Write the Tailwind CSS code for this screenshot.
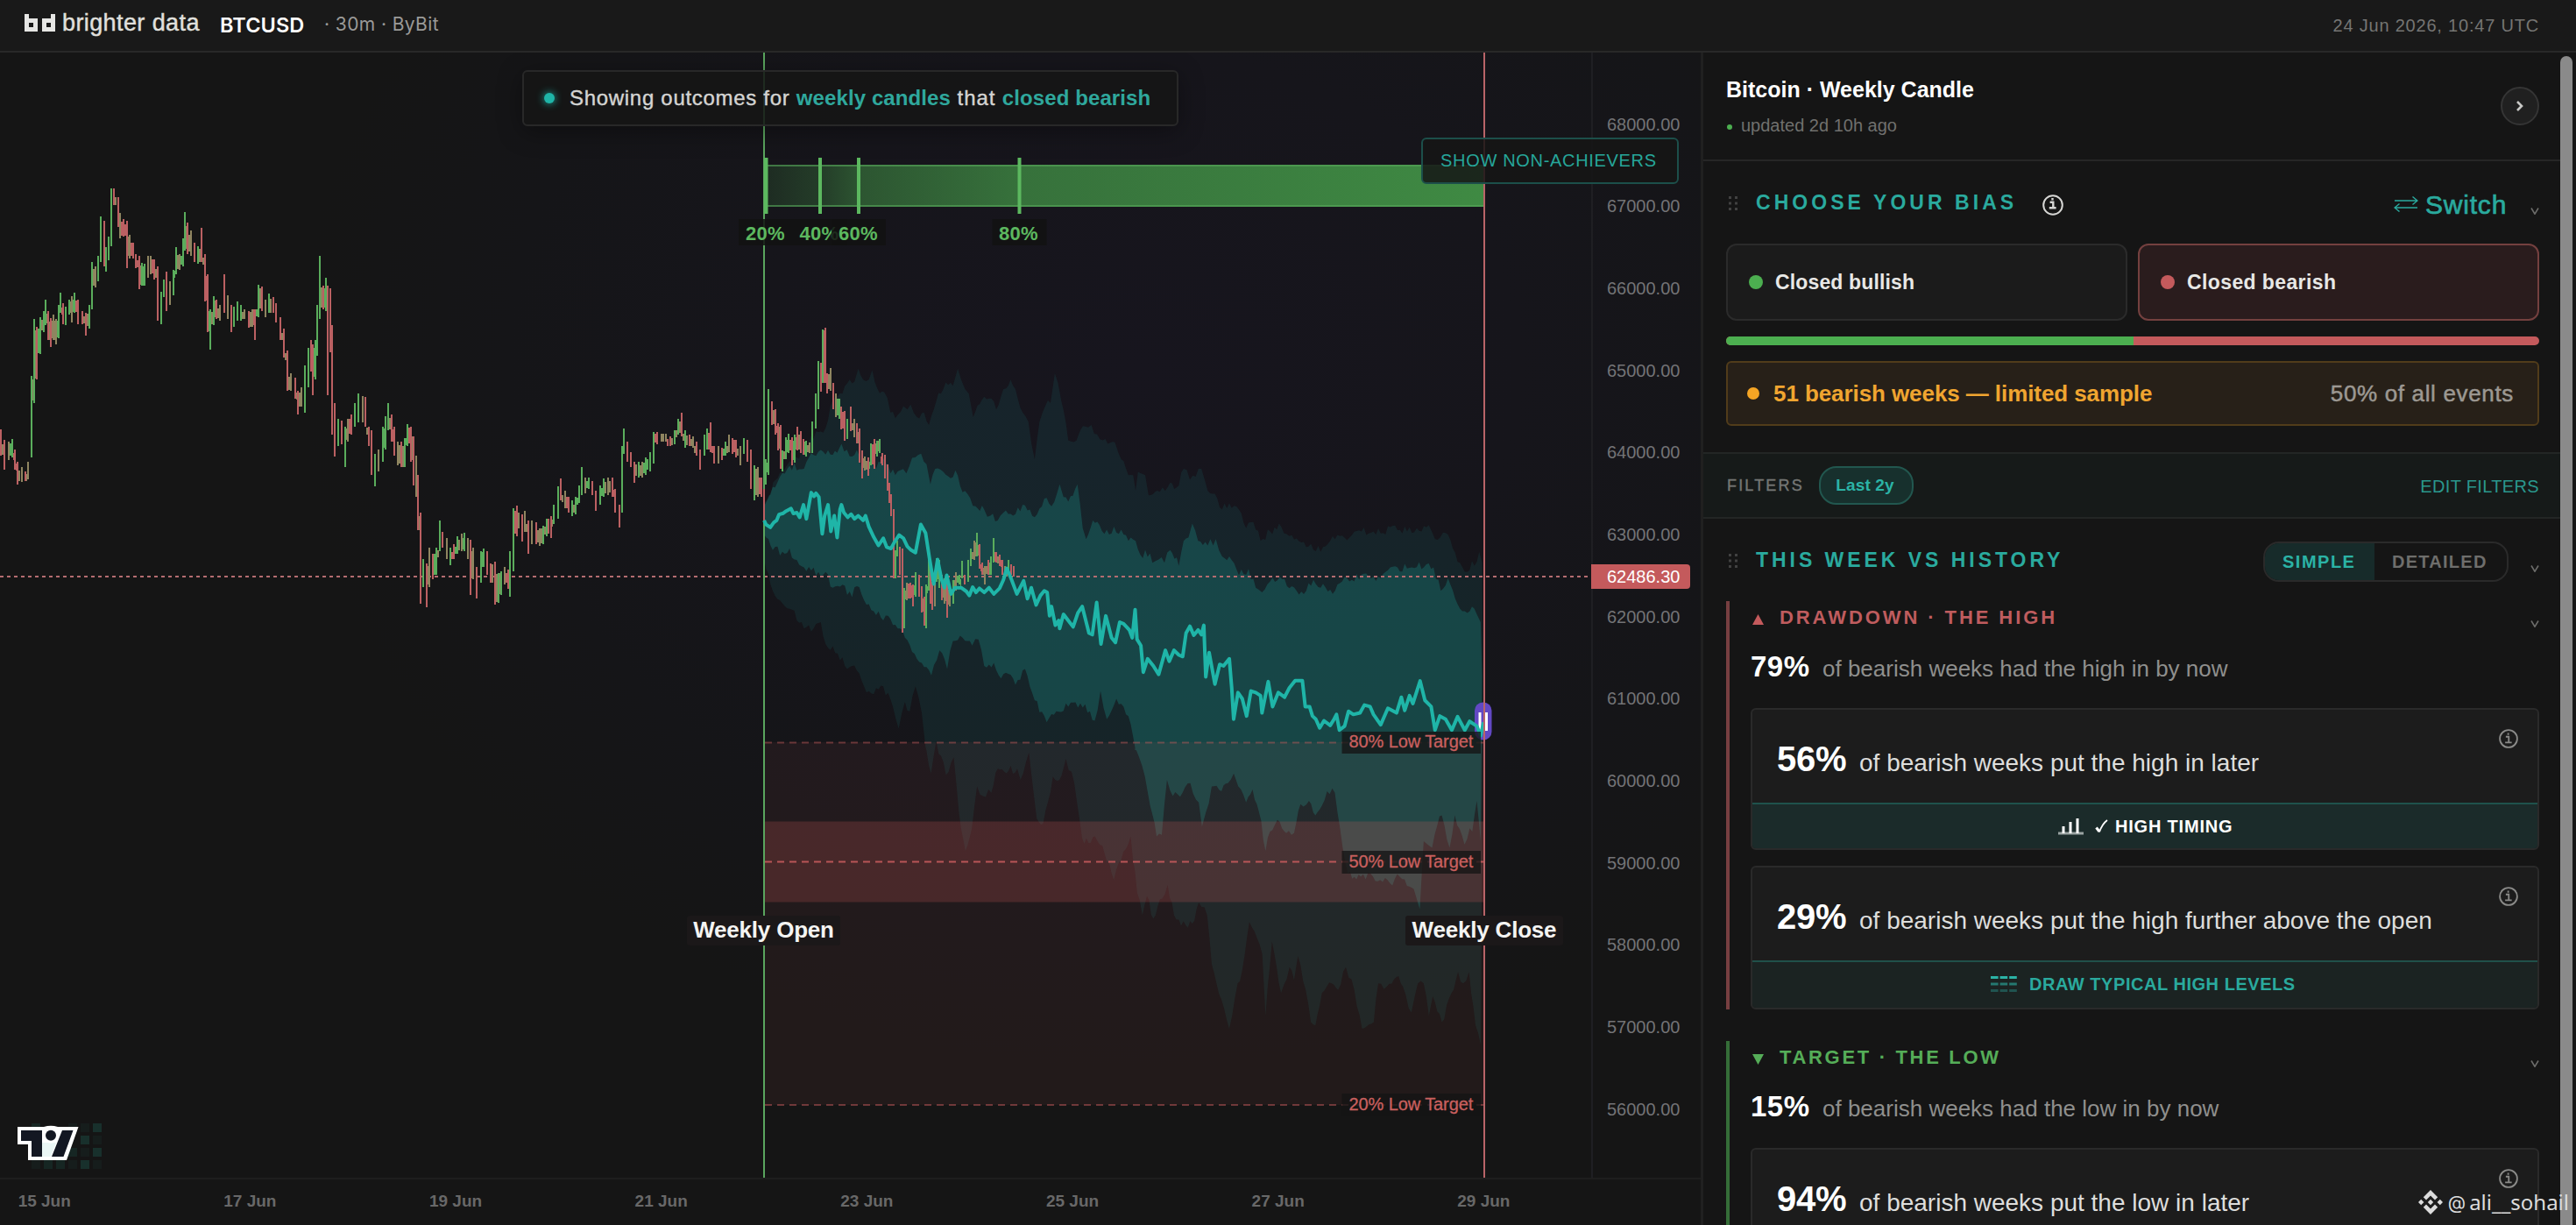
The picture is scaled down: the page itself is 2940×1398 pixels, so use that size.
<!DOCTYPE html>
<html lang="en">
<head>
<meta charset="utf-8">
<title>BTCUSD · brighter data</title>
<script src="https://cdn.jsdelivr.net/npm/@tailwindcss/browser@4"></script>
</head>
<body class="flex h-[1398px] w-[2940px] flex-col overflow-hidden bg-[#151515] font-['Liberation_Sans',Arial,sans-serif] leading-none text-[#e8e8e6]">

<!-- Top bar -->
<header class="flex h-[60px] shrink-0 items-center justify-between border-b-2 border-[#282828] bg-[#191919] pr-[42px] pl-7">
  <div class="flex items-center">
    <svg class="-mt-[6px] h-5 w-9 fill-[#e6e6e4]" viewBox="0 0 36 20"><path fill-rule="evenodd" d="M0 0h5v5h10v15H0zM5 10v5h5v-5z"/><path fill-rule="evenodd" d="M30 0h5v20H20V5h10zM25 10v5h5v-5z"/></svg>
    <span class="-mt-[6px] ml-[7px] w-[180px] text-[27px] tracking-[0.4px] text-[#e0e0de] [-webkit-text-stroke:0.4px]">brighter data</span>
    <span class="-mt-[1px] w-[119px] font-['Inter'] text-[23.5px] font-semibold tracking-[0.1px] text-white">BTCUSD</span>
    <span class="-mt-[3px] font-['Inter'] text-[21px] tracking-[0.4px] text-[#9a9a98]">· 30m · ByBit</span>
  </div>
  <span class="-mt-[1px] text-[20px] tracking-[0.8px] text-[#757573]">24 Jun 2026, 10:47 UTC</span>
</header>

<main class="flex min-h-0 flex-1 overflow-hidden">
  <!-- Chart -->
  <section class="relative flex w-[1941px] shrink-0 flex-col bg-[radial-gradient(ellipse_960px_800px_at_1300px_360px,#17151e_0%,#16151b_45%,#151518_75%,#151515_100%)]">
    <div class="flex h-[1284px]">
      <svg id="plot" class="h-[1284px] w-[1816px] shrink-0" viewBox="0 60 1816 1284" font-family="Liberation Sans, Arial, sans-serif">
        <defs>
          <linearGradient id="reach" x1="872" x2="1694" y1="0" y2="0" gradientUnits="userSpaceOnUse">
            <stop offset="0" stop-color="#4caf50" stop-opacity=".14"/>
            <stop offset=".08" stop-color="#4caf50" stop-opacity=".26"/>
            <stop offset=".135" stop-color="#4caf50" stop-opacity=".42"/>
            <stop offset=".355" stop-color="#4caf50" stop-opacity=".6"/>
            <stop offset="1" stop-color="#4caf50" stop-opacity=".76"/>
          </linearGradient>
        </defs>
        <polygon id="outer" fill="#1fb5a8" fill-opacity=".1"/>
        <polygon id="inner" fill="#1fb5a8" fill-opacity=".235"/>
        <rect x="872" y="847" width="822" height="414" fill="#d05a5c" fill-opacity=".075"/>
        <rect x="872" y="937.5" width="822" height="92" fill="#d05a5c" fill-opacity=".22"/>
        <g stroke="#c45a5c" stroke-width="2">
          <path d="M873 847.5H1694" stroke-opacity=".45" stroke-dasharray="8 6"/>
          <path d="M873 983.5H1694" stroke-opacity=".9" stroke-dasharray="8 6"/>
          <path d="M873 1261H1694" stroke-opacity=".5" stroke-dasharray="8 6"/>
        </g>
        <rect x="872" y="188" width="822" height="48" fill="url(#reach)"/>
        <path d="M872 189H1694M872 235H1694" stroke="#57a85a" stroke-opacity=".6" stroke-width="2"/>
        <path d="M0 658H1816" stroke="#b46c70" stroke-width="2" stroke-dasharray="4 4"/>
        <path d="M872 60V1344" stroke="#5aa55e" stroke-width="2"/>
        <g id="candles" shape-rendering="crispEdges"></g>
        <rect x="1683" y="801.500" width="19.500" height="43" rx="9.500" fill="#6248c4"/>
        <path d="M1689 813V834M1696.500 813V834" stroke="#fff" stroke-width="3"/>
        <polyline id="median" fill="none" stroke="#1fb5a8" stroke-width="4" stroke-linejoin="round"/>
        <path d="M1694 60V1344" stroke="#b96468" stroke-width="2"/>
        <g fill="#5cb85f">
          <path d="M872 180h4.500v64h-4.500zM934 180h4v64h-4zM978 180h4v64h-4zM1161.500 180h4v64h-4z"/>
          <g font-size="22" font-weight="700" text-anchor="middle" letter-spacing=".3">
            <rect x="843" y="250" width="62" height="30" fill="#121212" fill-opacity=".85"/><text x="873.500" y="274">20%</text>
            <rect x="905" y="250" width="62" height="30" fill="#121212" fill-opacity=".85"/><text x="935" y="274">40%</text>
            <rect x="949" y="250" width="62" height="30" fill="#121212" fill-opacity=".85"/><text x="979.500" y="274">60%</text>
            <rect x="1132.500" y="250" width="62" height="30" fill="#121212" fill-opacity=".85"/><text x="1162.500" y="274">80%</text>
          </g>
        </g>
        <g font-size="20" fill="#c9605f" stroke-width=".3" letter-spacing="-.1">
          <rect x="1531.500" y="835" width="158.500" height="25" fill="#141414" fill-opacity=".78"/><text x="1539.500" y="853" stroke="#c9605f">80% Low Target</text>
          <rect x="1531.500" y="971" width="158.500" height="26" fill="#141414" fill-opacity=".78"/><text x="1539.500" y="990" stroke="#c9605f">50% Low Target</text>
          <rect x="1531.500" y="1248" width="158.500" height="26" fill="#141414" fill-opacity=".78"/><text x="1539.500" y="1267" stroke="#c9605f">20% Low Target</text>
        </g>
        <g font-size="26" font-weight="700" fill="#f4f4f2" text-anchor="middle" letter-spacing="-.2">
          <rect x="784" y="1045" width="175" height="34" rx="3" fill="#1b1819"/><text x="871.500" y="1069.500">Weekly Open</text>
          <rect x="1604" y="1045" width="180" height="34" rx="3" fill="#1b1819"/><text x="1694" y="1069.500">Weekly Close</text>
        </g>
        <!-- chart library badge -->
        <g fill="#1d5a50">
          <path fill-opacity=".4" d="M106 1282h10v10h-10zM92 1296h10v10h-10zM106 1310h10v10h-10zM92 1324h10v10h-10z"/>
          <path fill-opacity=".25" d="M36 1282h10v10h-10zM78 1310h10v10h-10zM64 1324h10v10h-10zM50 1324h10v10h-10z"/>
          <path fill-opacity=".12" d="M78 1282h10v10h-10zM92 1282h10v10h-10zM106 1296h10v10h-10zM92 1310h10v10h-10zM78 1324h10v10h-10zM106 1324h10v10h-10zM36 1324h10v10h-10z"/>
        </g>
        <path fill="#fff" d="M20 1286H50Q58 1283.500 66 1286H89.500L76 1324H32V1306H20z"/>
        <path fill="#eaf6f5" d="M48 1304H64L58 1320H48z"/>
        <path fill="#131722" d="M24 1290H48V1320H36V1302H24zM71 1290H83.500L72.500 1320H59z"/>
        <circle cx="58" cy="1295.700" r="9" fill="#fff"/><circle cx="58" cy="1295.700" r="6" fill="#131722"/>
      </svg>
      <!-- Price scale -->
      <div class="relative w-[125px] border-l-2 border-[#1f1f23] pt-[35px] pl-[16px] text-[20px] text-[#737376]">
        <div id="prices"></div>
        <div class="absolute top-[584px] -left-[2px] flex h-[28px] w-[113px] items-center rounded-r bg-[#c45a5c] pl-[18px] text-white">62486.30</div>
      </div>
    </div>
    <!-- Time scale -->
    <div id="days" class="flex flex-1 overflow-hidden border-t-2 border-[#1e1e1e] pt-[15px] text-[19px] font-bold text-[#686868]"></div>

    <div class="absolute top-[20px] left-[596px] flex h-[64px] w-[749px] items-center rounded-md border-2 border-[#282828] bg-[#151515]/85 pl-[23px] text-[24px] whitespace-pre shadow-[0_6px_28px_rgba(0,0,0,0.35)]">
      <span class="mr-[17px] size-3 rounded-full bg-[#1fb5a8] shadow-[0_0_10px_#1fb5a8]"></span><span class="-mt-[1px] flex"><span class="tracking-[0.7px] text-[#d4d4d2] [-webkit-text-stroke:0.4px]">Showing outcomes for </span><span class="font-bold tracking-[0.1px] text-[#2fa89d]">weekly candles</span><span class="tracking-[0.9px] text-[#d4d4d2] [-webkit-text-stroke:0.4px]"> that </span><span class="font-bold tracking-[0.1px] text-[#2fa89d]">closed bearish</span></span>
    </div>
    <div class="absolute top-[97px] left-[1622px] flex h-[53px] w-[294px] items-center rounded-md border-2 border-[#1c4f4a] bg-[#151515]/85 pb-[1px] pl-5 text-[20px] tracking-[0.68px] whitespace-nowrap text-[#26a69a]">SHOW NON-ACHIEVERS</div>
  </section>

  <!-- Side panel -->
  <aside class="relative min-w-0 flex-1 border-l-[3px] border-[#202020]">
    <div class="w-[979px]">
      <div class="flex h-[124px] items-center justify-between border-b-2 border-[#262626] pr-[25px] pl-[26px]">
        <div>
          <div class="flex h-[30px] items-center text-[25px] font-bold text-white">Bitcoin · Weekly Candle</div>
          <div class="mt-[13px] flex h-6 items-center text-[20px] text-[#70706e]"><i class="mt-1 mr-[10px] ml-[1px] size-[6px] rounded-full bg-[#4caf50]"></i>updated 2d 10h ago</div>
        </div>
        <div class="flex size-11 items-center justify-center rounded-full border-2 border-[#353535] bg-[#202020]">
          <svg class="h-3 w-2" viewBox="0 0 8 12" fill="none" stroke="#c8c8c6" stroke-width="2.600"><path d="M1 1l5 5-5 5"/></svg>
        </div>
      </div>

      <div class="flex h-[94px] items-center pt-[2px] pr-[25px] pl-[26px]">
        <svg class="ml-[3px] h-[16px] w-[11px] fill-[#414141]" viewBox="0 0 11 16"><path d="M0 0h3v3H0zM7 0h3v3H7zM0 6.500h3v3H0zM7 6.500h3v3H7zM0 13h3v3H0zM7 13h3v3H7z"/></svg>
        <span class="-mt-[1px] ml-[20px] text-[23px] font-bold tracking-[4.05px] text-[#2aaa9e]">CHOOSE YOUR BIAS</span>
        <svg class="mt-1 ml-[29px] size-6" viewBox="0 0 24 24" fill="none" stroke="#d6d6d4" stroke-width="2"><circle cx="12" cy="12" r="10.800"/><path stroke-width="2.400" d="M8.600 8.800H12.300V15.300M7.800 15.300H15.600M11.500 4v2.600"/></svg>
        <span class="flex-1"></span>
        <svg class="mt-[2px] h-[18px] w-[28px]" viewBox="0 0 28 18" fill="none" stroke="#2aaa9e" stroke-width="1.400"><path d="M1 5H27M21.500 .5L27 5L21.500 9.500M27 13H1M6.500 8.500L1 13L6.500 17.500"/></svg>
        <span class="mt-[3px] ml-[8px] w-[120px] text-[30px] tracking-[0.8px] text-[#2aaa9e] [-webkit-text-stroke:0.7px]">Switch</span>
        <svg class="mt-[18px] h-[8px] w-[10px]" viewBox="0 0 10 8" fill="none" stroke="#6c6c6a" stroke-width="1.600"><path d="M1 .5L5 7.200L9 .5"/></svg>
      </div>

      <div class="flex gap-[12px] pr-[25px] pl-[26px] text-[23px] font-bold">
        <div class="flex h-[88px] flex-1 items-center rounded-[12px] border-2 border-[#2b2b2b] bg-[#1b1b1b] pl-6 tracking-[0.14px]"><i class="mr-[14px] size-4 rounded-full bg-[#4caf50]"></i>Closed bullish</div>
        <div class="flex h-[88px] flex-1 items-center rounded-[12px] border-2 border-[#74403f] bg-[#2a1c1d] pl-6 tracking-[0.39px]"><i class="mr-[14px] size-4 rounded-full bg-[#c45a5c]"></i>Closed bearish</div>
      </div>
      <div class="mt-[18px] mr-[25px] ml-[26px] flex h-[10px] overflow-hidden rounded-[5px] bg-[#c45a5c]"><div class="w-[465px] bg-[#4caf50]"></div></div>
      <div class="mt-[18px] mr-[25px] ml-[26px] flex h-[74px] items-center justify-between rounded-md border-2 border-[#513c1a] bg-[#272018] pr-[27px] pl-[22px] text-[26px]">
        <span class="flex items-center font-bold tracking-[-0.08px] text-[#f0a530]"><i class="mr-[16px] size-[14px] rounded-full bg-[#f5a524]"></i>51 bearish weeks — limited sample</span>
        <span class="tracking-[0.66px] text-[#9c9892] [-webkit-text-stroke:0.5px]">50% of all events</span>
      </div>

      <div class="mt-[30px] flex h-[76px] items-center border-y-2 border-[#232625] bg-[#161a19] pr-[25px] pl-[27px]">
        <span class="w-[105px] text-[18px] tracking-[2.17px] text-[#747674] [-webkit-text-stroke:0.4px]">FILTERS</span>
        <span class="flex h-11 w-[108px] items-center justify-center rounded-[20px] border-2 border-[#22574f] bg-[#17302d] pr-[3px] pb-[1px] text-[19px] font-bold tracking-[0.15px] text-[#2bb3a6]">Last 2y</span>
        <span class="flex-1"></span>
        <span class="mt-[1px] text-[20px] tracking-[0.35px] text-[#2a978d]">EDIT FILTERS</span>
      </div>

      <div class="flex h-[94px] items-center pt-[2px] pr-[25px] pl-[26px]">
        <svg class="ml-[3px] h-[16px] w-[11px] fill-[#414141]" viewBox="0 0 11 16"><path d="M0 0h3v3H0zM7 0h3v3H7zM0 6.500h3v3H0zM7 6.500h3v3H7zM0 13h3v3H0zM7 13h3v3H7z"/></svg>
        <span class="-mt-[1px] ml-[20px] flex-1 text-[23px] font-bold tracking-[3.96px] text-[#2aaa9e]">THIS WEEK VS HISTORY</span>
        <div class="mt-[1px] mr-[25px] flex h-[46px] w-[280px] overflow-hidden rounded-[18px] border-2 border-[#2a2a2a] pb-0 text-[20px] font-bold">
          <span class="flex w-[125px] items-center bg-[#172b2a] pl-[20px] tracking-[1.5px] text-[#2bb3a6]">SIMPLE</span>
          <span class="flex flex-1 items-center pl-[20px] tracking-[1.27px] text-[#6e6e6c]">DETAILED</span>
        </div>
        <svg class="mt-[18px] h-[8px] w-[10px]" viewBox="0 0 10 8" fill="none" stroke="#6c6c6a" stroke-width="1.600"><path d="M1 .5L5 7.200L9 .5"/></svg>
      </div>

      <!-- Drawdown -->
      <div class="mr-[25px] ml-[26px] h-[466px] border-l-4 border-[#773f41] pl-6">
        <div class="flex h-[37px] items-center text-[22px] font-bold tracking-[2.92px] text-[#bf5c5e]">
          <svg class="mt-[4px] mr-[18px] ml-[2px] h-3 w-[13px] fill-[#c45a5c]" viewBox="0 0 13 12"><path d="M6.500 0L13 12H0z"/></svg><span class="flex-1">DRAWDOWN · THE HIGH</span>
          <svg class="mt-[14px] h-[8px] w-[10px]" viewBox="0 0 10 8" fill="none" stroke="#6c6c6a" stroke-width="1.600"><path d="M1 .5L5 7.200L9 .5"/></svg>
        </div>
        <div class="flex h-[75px] items-center"><div class="flex items-baseline"><b class="w-[82px] text-[33px] tracking-[0.5px] text-white">79%</b><span class="text-[26px] text-[#8f8f8d]">of bearish weeks had the high in by now</span></div></div>
        <div class="relative mt-[10px] flex h-[162px] flex-col overflow-hidden rounded-md border-2 border-[#2a2a2a] bg-[#1c1c1c]">
          <div class="flex h-[106px] items-center pt-[6px] pl-[28px]"><div class="flex items-baseline"><b class="w-[94px] text-[40px] tracking-[-0.3px] text-white">56%</b><span class="text-[28px] text-[#dededc]">of bearish weeks put the high in later</span></div></div>
          <svg class="absolute top-[22px] right-[22px] size-[22px]" viewBox="0 0 24 24" fill="none" stroke="#8a8a88" stroke-width="2"><circle cx="12" cy="12" r="10.800"/><path d="M8.600 9.500H12.300V16.500M7.800 16.800H16M11.600 5v2.400"/></svg>
          <div class="flex flex-1 items-center border-t-2 border-[#1f524c] bg-[#1b2b2a] pl-[349px] text-[20px] font-bold text-white">
            <svg class="h-[20px] w-[29px]" viewBox="0 0 29 20" fill="none"><path d="M0 18H29" stroke="#9aa3a2" stroke-width="3"/><path d="M6 18V10M14 18V5M22 18V1" stroke="#fff" stroke-width="3"/></svg>
            <svg class="ml-[13px] h-4 w-[15px]" viewBox="0 0 15 16" fill="none" stroke="#fff"><path d="M1.500 9.500L5 14" stroke-width="3"/><path d="M5 14.500C7 9 10 4 14 1" stroke-width="1.800"/></svg>
            <span class="ml-[8px] tracking-[0.8px]">HIGH TIMING</span>
          </div>
        </div>
        <div class="relative mt-[18px] flex h-[164px] flex-col overflow-hidden rounded-md border-2 border-[#2a2a2a] bg-[#1c1c1c]">
          <div class="flex h-[106px] items-center pt-[6px] pl-[28px]"><div class="flex items-baseline"><b class="w-[94px] text-[40px] tracking-[-0.3px] text-white">29%</b><span class="text-[28px] text-[#dededc]">of bearish weeks put the high further above the open</span></div></div>
          <svg class="absolute top-[22px] right-[22px] size-[22px]" viewBox="0 0 24 24" fill="none" stroke="#8a8a88" stroke-width="2"><circle cx="12" cy="12" r="10.800"/><path d="M8.600 9.500H12.300V16.500M7.800 16.800H16M11.600 5v2.400"/></svg>
          <div class="flex flex-1 items-center border-t-2 border-[#20504a] bg-[#1b2322] pb-[2px] pl-[272px] text-[20px] font-bold text-[#2aaa9e]">
            <svg class="mr-[14px] h-[20px] w-[30px]" viewBox="0 0 30 20" stroke="#2bb3a6" stroke-width="3" stroke-dasharray="8.600 2"><path d="M0 2.500H30"/><path d="M0 10H30" stroke-opacity=".6"/><path d="M0 17.500H30" stroke-opacity=".35"/></svg>
            <span class="tracking-[0.54px]">DRAW TYPICAL HIGH LEVELS</span>
          </div>
        </div>
      </div>

      <!-- Target -->
      <div class="mt-[36px] mr-[25px] ml-[26px] h-[300px] border-l-4 border-[#356d38] pl-6">
        <div class="flex h-[37px] items-center text-[22px] font-bold tracking-[2.68px] text-[#55ad58]">
          <svg class="mt-[4px] mr-[18px] ml-[2px] h-3 w-[13px] fill-[#55ad58]" viewBox="0 0 13 12"><path d="M6.500 12L13 0H0z"/></svg><span class="flex-1">TARGET · THE LOW</span>
          <svg class="mt-[14px] h-[8px] w-[10px]" viewBox="0 0 10 8" fill="none" stroke="#6c6c6a" stroke-width="1.600"><path d="M1 .5L5 7.200L9 .5"/></svg>
        </div>
        <div class="flex h-[75px] items-center"><div class="flex items-baseline"><b class="w-[82px] text-[33px] tracking-[0.5px] text-white">15%</b><span class="text-[26px] text-[#8f8f8d]">of bearish weeks had the low in by now</span></div></div>
        <div class="relative mt-[10px] flex h-[162px] flex-col overflow-hidden rounded-md border-2 border-[#2a2a2a] bg-[#1c1c1c]">
          <div class="flex h-[106px] items-center pt-[6px] pl-[28px]"><div class="flex items-baseline"><b class="w-[94px] text-[40px] tracking-[-0.3px] text-white">94%</b><span class="text-[28px] text-[#dededc]">of bearish weeks put the low in later</span></div></div>
          <svg class="absolute top-[22px] right-[22px] size-[22px]" viewBox="0 0 24 24" fill="none" stroke="#8a8a88" stroke-width="2"><circle cx="12" cy="12" r="10.800"/><path d="M8.600 9.500H12.300V16.500M7.800 16.800H16M11.600 5v2.400"/></svg>
        </div>
      </div>
    </div>

    <div class="absolute top-[4px] right-[4px] bottom-0 w-[14px] rounded-t-full bg-[#8a8a8a]"></div>
    <!-- Watermark -->
    <div class="absolute right-[8px] bottom-[10px] flex h-8 items-center font-['Noto_Sans'] text-[24px] whitespace-nowrap text-[#dcdcdc]">
      <svg class="mr-[6px] size-[28px] fill-[#dcdcdc]" viewBox="0 0 28 28"><path d="M14 0l8.200 8.200-3.200 3.200-5-5-5 5-3.200-3.200zM14 28l8.200-8.200-3.200-3.200-5 5-5-5-3.200 3.200zM0 14l3.200-3.200L6.400 14l-3.200 3.200zM21.600 14l3.200-3.200L28 14l-3.200 3.200zM10.800 14l3.200-3.200 3.200 3.200-3.200 3.200z"/></svg>
      <span class="font-['Inter'] text-[21px]">@</span><span class="ml-[4px]">ali__sohail</span>
    </div>
  </aside>
</main>

<script>
const el = id => document.getElementById(id);

el('prices').innerHTML = Array.from({length: 13}, (_, i) =>
  `<div class="flex h-[93.67px] items-center">${68000 - i * 1000}.00</div>`).join('');
el('days').innerHTML = [15, 17, 19, 21, 23, 25, 27, 29].map((d, i) =>
  `<span class="w-[234.67px] shrink-0 text-center" style="margin-left:${i ? 0 : -66.6}px">${d} Jun</span>`).join('');

// Candle ranges: x, top, bottom, colour (g rising, r falling, m mixed)
const past = `0,1098,1165,r 6,1125,1200,r 14,1130,1175,m 20,1123,1170,g 26,1150,1200,r 31,1180,1238,r 38,1195,1232,m 44,1205,1230,r 50,1180,1225,m 56,960,1170,g 60,815,1030,g 66,835,970,r 72,810,905,g 78,795,850,g 82,767,830,g 87,795,870,r 91,812,886,r 96,805,870,m 101,815,880,m 105,780,865,g 109,748,800,g 114,775,828,r 118,785,832,g 124,765,805,g 130,758,825,m 135,748,800,g 141,765,828,r 148,795,828,r 155,800,857,r 161,780,840,g 166,670,790,g 172,682,735,m 178,655,720,g 182,553,670,g 188,565,680,r 192,632,695,g 197,605,665,g 202,482,630,g 207,482,525,r 214,505,580,r 218,545,610,m 224,560,605,r 230,565,685,r 235,600,660,m 241,620,660,r 247,650,685,r 253,655,740,r 258,672,730,g 263,675,730,g 269,655,710,m 273,655,700,m 280,662,715,r 286,680,820,r 292,745,828,g 297,715,760,g 303,695,795,r 309,720,780,m 315,690,755,g 320,632,700,g 326,650,690,m 332,610,680,g 336,543,640,g 341,570,650,r 347,590,655,m 353,620,670,r 360,630,675,g 366,583,670,r 372,650,770,r 378,700,850,r 383,790,893,g 388,757,830,g 394,765,815,r 400,780,820,m 408,700,800,r 414,755,815,m 420,780,850,r 426,785,835,g 432,770,820,g 438,780,820,g 445,790,815,m 452,795,838,r 459,790,835,m 464,790,870,r 470,728,810,g 476,732,795,r 483,765,810,m 490,750,800,g 497,760,800,r 503,775,825,r 510,810,870,r 517,840,915,r 523,895,1000,r 530,955,1000,m 537,965,1020,r 543,1000,1060,r 549,990,1040,m 555,935,1055,g 561,890,990,g 566,870,950,r 570,880,1010,r 575,870,970,g 578,780,910,g 583,655,815,g 588,730,790,r 593,710,795,g 597,730,1010,r 601,738,900,r 605,830,1110,r 610,1030,1168,r 616,1070,1140,g 622,1075,1135,r 628,1090,1193,g 634,1070,1130,m 640,1060,1110,r 646,1030,1090,g 653,1006,1080,g 660,1012,1080,m 666,1015,1090,r 672,1090,1140,r 677,1100,1215,r 683,1160,1243,g 690,1150,1205,m 697,1090,1180,g 702,1065,1150,g 707,1030,1100,g 713,1060,1130,r 719,1090,1165,r 725,1130,1190,m 731,1130,1195,r 737,1120,1195,g 743,1085,1140,g 748,1090,1180,r 753,1115,1240,r 758,1165,1270,m 762,1215,1355,r 767,1310,1543,r 771,1430,1500,g 777,1440,1552,r 783,1400,1500,m 789,1415,1480,r 795,1400,1470,g 801,1330,1410,g 807,1360,1400,r 814,1375,1430,m 820,1400,1445,g 827,1390,1430,r 834,1370,1415,g 841,1365,1410,m 847,1362,1410,g 852,1375,1430,m 857,1380,1520,r 863,1400,1480,m 869,1450,1530,r 876,1410,1490,g 882,1402,1450,g 888,1410,1470,r 895,1440,1490,r 902,1435,1546,r 908,1465,1540,g 914,1460,1520,g 920,1450,1495,m 926,1455,1505,r 930,1410,1525,g 936,1300,1460,g 942,1293,1370,r 946,1310,1350,m 952,1315,1385,r 957,1305,1360,m 963,1330,1415,r 970,1330,1390,m 977,1335,1390,r 984,1350,1395,m 990,1345,1390,g 997,1325,1370,g 1004,1320,1375,r 1010,1290,1340,g 1017,1243,1325,g 1023,1222,1280,r 1030,1255,1300,m 1037,1270,1310,r 1043,1280,1320,g 1050,1270,1315,g 1056,1240,1285,g 1061,1193,1265,g 1067,1220,1260,m 1073,1220,1250,g 1080,1230,1265,r 1087,1255,1305,r 1094,1240,1290,g 1100,1222,1270,g 1108,1220,1265,m 1116,1220,1270,r 1122,1250,1310,r 1129,1290,1348,r 1134,1140,1310,g 1138,1095,1160,g 1144,1130,1180,r 1150,1155,1195,r 1157,1180,1235,r 1164,1180,1220,g 1171,1180,1220,m 1178,1170,1215,g 1185,1155,1205,g 1192,1105,1185,g 1199,1105,1135,r 1207,1108,1130,m 1215,1108,1130,m 1223,1115,1140,r 1230,1100,1135,g 1237,1070,1110,g 1243,1055,1115,r 1250,1100,1145,g 1257,1110,1140,r 1264,1115,1145,m 1271,1130,1165,r 1277,1150,1200,r 1284,1110,1165,g 1290,1095,1150,g 1296,1080,1155,r 1303,1140,1185,r 1310,1140,1185,m 1317,1145,1175,r 1323,1130,1165,g 1330,1110,1155,m 1336,1120,1160,r 1343,1125,1170,r 1350,1140,1190,m 1356,1120,1160,g 1363,1125,1180,r 1370,1150,1250,r 1376,1190,1280,g 1382,1195,1270,m 1388,1220,1270,r 1393,1250,1330,r`;
const week = `24,460,540,g 30,235,510,g 37,275,350,r 43,300,380,r 49,345,430,r 54,350,490,r 59,430,498,g 66,390,460,g 72,378,440,g 78,390,480,r 84,380,470,g 90,355,430,r 96,370,440,r 102,395,445,r 108,400,450,g 115,405,440,m 121,340,440,g 127,250,360,g 133,145,300,g 138,150,245,r 143,45,215,g 148,40,215,r 152,185,250,r 158,168,240,m 164,215,300,r 170,250,325,m 176,265,330,g 181,290,365,r 187,305,400,r 193,330,395,g 200,290,370,r 207,330,390,m 213,345,410,r 219,360,470,r 224,430,520,r 230,450,495,m 237,455,512,r 243,410,480,g 249,395,490,r 255,400,450,g 260,395,440,g 266,440,480,r 272,445,520,r 277,475,560,r 281,535,600,r 285,570,640,r 289,620,840,r 294,750,840,g 298,720,770,g 303,740,830,r 308,745,1015,r 312,870,1000,g 318,855,910,m 324,855,905,r 330,860,930,r 336,820,900,g 342,830,900,r 348,865,950,r 353,900,990,r 358,860,1000,g 362,765,880,g 367,800,920,r 371,850,940,r 376,850,930,m 380,775,850,g 385,780,870,g 390,830,910,r 396,840,920,m 401,830,965,r 407,870,930,m 413,845,920,g 420,820,880,m 426,830,860,g 432,785,840,g 438,830,860,r 445,780,850,g 451,745,800,g 457,720,780,m 463,695,770,g 468,730,810,r 474,790,830,r 480,800,860,m 486,780,830,r 492,770,830,g 498,710,790,g 504,755,790,r 510,765,800,r 516,780,830,r 522,800,840,m 528,780,830,g 534,795,830,r 540,800,835,r`;

const range = (text, x0, y0, sx, sy) => text.split(' ').map(row => {
  const [x, t, b, c] = row.split(',');
  return {x: x0 + x * sx, t: y0 + t * sy, b: y0 + b * sy, c};
});
const bars = [...range(past, 0, 0, .625, .44643), ...range(week, 860, 360, .5485, .35714)];
const fill = {g: '#5aad5c', r: '#bb6062', m: '#8f8560'};
let seed = 7;
const rnd = () => (seed = seed * 16807 % 2147483647) / 2147483647;
let out = '';
bars.forEach((p, i) => {
  const n = bars[i + 1];
  out += `<rect x="${Math.round(p.x)}" y="${p.t}" width="2" height="${p.b - p.t}" fill="${fill[p.c]}"/>`;
  if (n && Math.round(n.x) - Math.round(p.x) > 2 && rnd() < .62) {
    const t = Math.max(p.t, n.t) + rnd() * 5, b = Math.max(Math.min(p.b, n.b) - rnd() * 3, t + 8);
    out += `<rect x="${Math.round(p.x) + 2}" y="${t}" width="${Math.min(2, Math.round(n.x) - Math.round(p.x) - 2)}" height="${b - t}" fill="${rnd() < .5 ? fill.m : fill[n.c]}"/>`;
  }
});
el('candles').innerHTML = out;

// Projection bands
const A = text => text.trim().split(/\s+/).map(s => { const [x, y] = s.split(','); return [860 + x * .5485, 360 + y * .35714]; });
const B = text => text.trim().split(/\s+/).map(s => { const [x, y] = s.split(','); return [780 + x * .7398, 820 + y * .36862]; });
// adds small tick noise between the knots of an edge
const rough = (pts, amp) => {
  const r = [];
  pts.forEach((p, i) => {
    r.push(p);
    const n = pts[i + 1];
    if (!n || n[0] - p[0] < 5) return;
    const k = Math.floor((n[0] - p[0]) / 2.445);
    for (let j = 1; j < k; j++) r.push([p[0] + (n[0] - p[0]) * j / k, p[1] + (n[1] - p[1]) * j / k + (rnd() - .5) * amp]);
  });
  return r;
};
const outerTop = A(`22,600 50,520 80,470 110,420 130,370 150,360 165,270 185,250 200,205 210,212 218,170 228,205 240,205 247,175 258,235 272,245 285,310 300,318 312,290 320,300 327,285 340,325 355,310 365,350 380,275 395,235 410,215 415,225 425,170 432,205 440,235 448,250 457,325 475,270 490,265 505,300 520,235 535,205 545,235 560,310 572,340 585,460 595,340 607,290 618,280 627,185 640,270 655,400 672,400 690,355 703,350 715,380 732,395 752,405 765,460 780,510 790,510 795,560 800,500 815,510 822,575 840,560 862,548 880,550 895,490 908,525 920,515 932,490 945,560 960,570 975,620 990,600 1010,620 1025,680 1040,660 1055,720 1075,690 1098,675 1115,705 1140,725 1160,730 1180,755 1200,720 1220,705 1240,710 1265,690 1290,690 1310,695 1330,672 1360,690 1380,680 1390,690 1405,670 1418,715 1440,695 1455,745 1470,790 1485,820 1495,785 1500,800 1510,755 1516,790 1518,1200`);
const innerTop = A(`22,610 35,570 55,515 75,480 105,490 120,440 140,430 165,445 183,410 200,450 215,430 225,490 240,460 255,490 270,455 285,505 305,495 318,505 330,455 343,445 360,475 368,540 378,490 395,500 410,520 420,495 430,545 445,570 462,610 480,620 493,640 508,655 520,630 545,635 560,605 575,620 585,645 605,585 620,610 637,540 645,580 655,595 674,540 685,680 692,715 706,655 720,670 740,700 750,675 770,700 780,720 795,720 805,765 825,760 830,790 843,780 855,790 867,750 885,800 895,720 905,710 913,665 925,720 945,735 962,715 975,770 990,770 1010,830 1030,810 1045,870 1058,885 1075,850 1095,835 1110,865 1130,880 1150,880 1165,845 1180,870 1210,880 1225,850 1245,845 1270,825 1285,840 1305,840 1315,820 1340,805 1370,805 1400,795 1415,805 1430,880 1445,840 1460,905 1480,945 1495,930 1505,955 1513,980 1516,1150`);
const innerLow = [...A(`22,700 40,750 60,755 75,745 85,780 105,805 120,815 135,820 150,820 165,870 185,860 205,900 215,865 230,910 250,945 265,965 285,970 300,1000 315,1030 330,1075 350,1110 370,1150 387,1070 403,1130 415,1040 435,1030 455,1055 468,1035 480,1120 500,1110 515,1160 530,1145 545,1180 565,1130 585,1230 610,1300 630,1265 655,1250 680,1240 700,1265 710,1295 722,1200 735,1290 755,1225 770,1250 780,1280 795,1390`),
  ...B(`695,90 703,120 712,180 720,270 730,365 738,360 746,190 755,240 770,230 782,200 795,260 800,335 806,290 815,210 830,225 840,200 849,170 856,210 868,260 878,220 888,290 898,410 905,350 920,320 930,355 942,355 952,265 965,255 975,300 985,270 993,225 1005,230 1013,340 1025,480 1045,490 1060,480 1075,500 1090,510 1105,490 1120,520 1130,550 1136,590 1142,380 1155,400 1163,330 1170,300 1182,400 1190,300 1205,390 1213,340 1217,350 1224,255 1230,380`)];
const outerLow = [...A(`22,780 40,880 60,920 80,940 105,1000 125,1000 140,980 150,1050 175,1080 190,1120 215,1135 230,1185 250,1210 270,1185 290,1250 302,1320 315,1235 325,1265 337,1185 350,1270 358,1380`),
  ...B(`375,100 382,170 390,70 405,175 417,120 425,290 435,410 445,340 453,210 462,240 475,230 485,155 495,165 515,155 520,190 533,105 545,310 555,325 570,180 580,190 590,125 603,200 615,370 625,385 635,365 650,420 664,500 675,440 690,365 700,540 708,610 715,550 725,620 735,560 747,515 757,610 775,640 785,635 795,570 808,610 815,760 830,870 842,960 855,820 862,780 873,630 885,680 893,730 898,920 908,690 922,850 935,770 942,810 948,735 960,840 968,940 975,950 985,850 1000,820 1010,840 1022,770 1035,840 1047,960 1065,940 1072,820 1085,830 1100,800 1110,830 1123,910 1133,820 1142,820 1150,920 1156,860 1170,940 1185,850 1195,785 1203,820 1212,785 1222,950 1230,1010`)];
const band = (top, low, amp) => [...rough(top, amp), ...rough(low, amp).reverse()].map(p => p.join()).join(' ');
el('outer').setAttribute('points', band(outerTop, outerLow, 10));
el('inner').setAttribute('points', band(innerTop, innerLow, 10));
el('median').setAttribute('points', A(`22,655 26,668 35,677 42,662 48,655 53,636 62,632 68,625 78,617 83,633 90,630 96,645 104,605 110,650 120,566 126,578 130,568 136,580 143,698 148,640 155,605 161,690 168,640 174,710 180,620 183,605 188,630 196,645 203,635 210,650 218,640 228,655 233,640 240,675 250,708 260,735 270,712 277,740 286,745 293,725 303,702 312,712 320,738 328,750 337,758 348,668 358,695 366,775 375,858 383,780 391,842 397,870 402,830 411,890 419,870 432,870 443,882 449,895 456,868 463,885 470,872 480,885 490,870 500,890 512,872 520,845 527,808 537,845 548,890 562,848 570,905 578,870 588,925 597,895 605,880 611,885 616,960 620,930 628,990 635,975 637,1000 645,955 655,975 665,995 675,950 684,930 698,1015 705,1020 714,917 723,1050 733,960 745,1030 753,1045 762,980 770,985 782,1005 788,1030 794,940 798,1035 806,1055 811,1140 820,1097 832,1120 843,1147 857,1070 865,1105 875,1070 885,1085 893,1090 900,1015 908,993 916,1022 925,1005 932,1020 937,990 941,1155 948,1077 960,1178 970,1115 978,1120 990,1097 995,1190 999,1290 1008,1205 1017,1225 1026,1280 1035,1200 1045,1205 1055,1215 1058,1270 1071,1170 1080,1250 1092,1205 1105,1220 1115,1190 1127,1167 1142,1167 1148,1250 1157,1250 1163,1280 1170,1290 1178,1318 1187,1295 1200,1310 1208,1290 1213,1275 1219,1325 1230,1312 1238,1265 1248,1275 1262,1270 1271,1245 1283,1250 1290,1275 1305,1308 1320,1255 1338,1270 1348,1220 1355,1262 1365,1215 1372,1240 1387,1168 1397,1230 1410,1250 1418,1325 1428,1280 1440,1290 1453,1325 1465,1282 1480,1325 1490,1297 1505,1312 1513,1343 1519,1300`).map(p => p.join()).join(' '));
</script>
</body>
</html>
